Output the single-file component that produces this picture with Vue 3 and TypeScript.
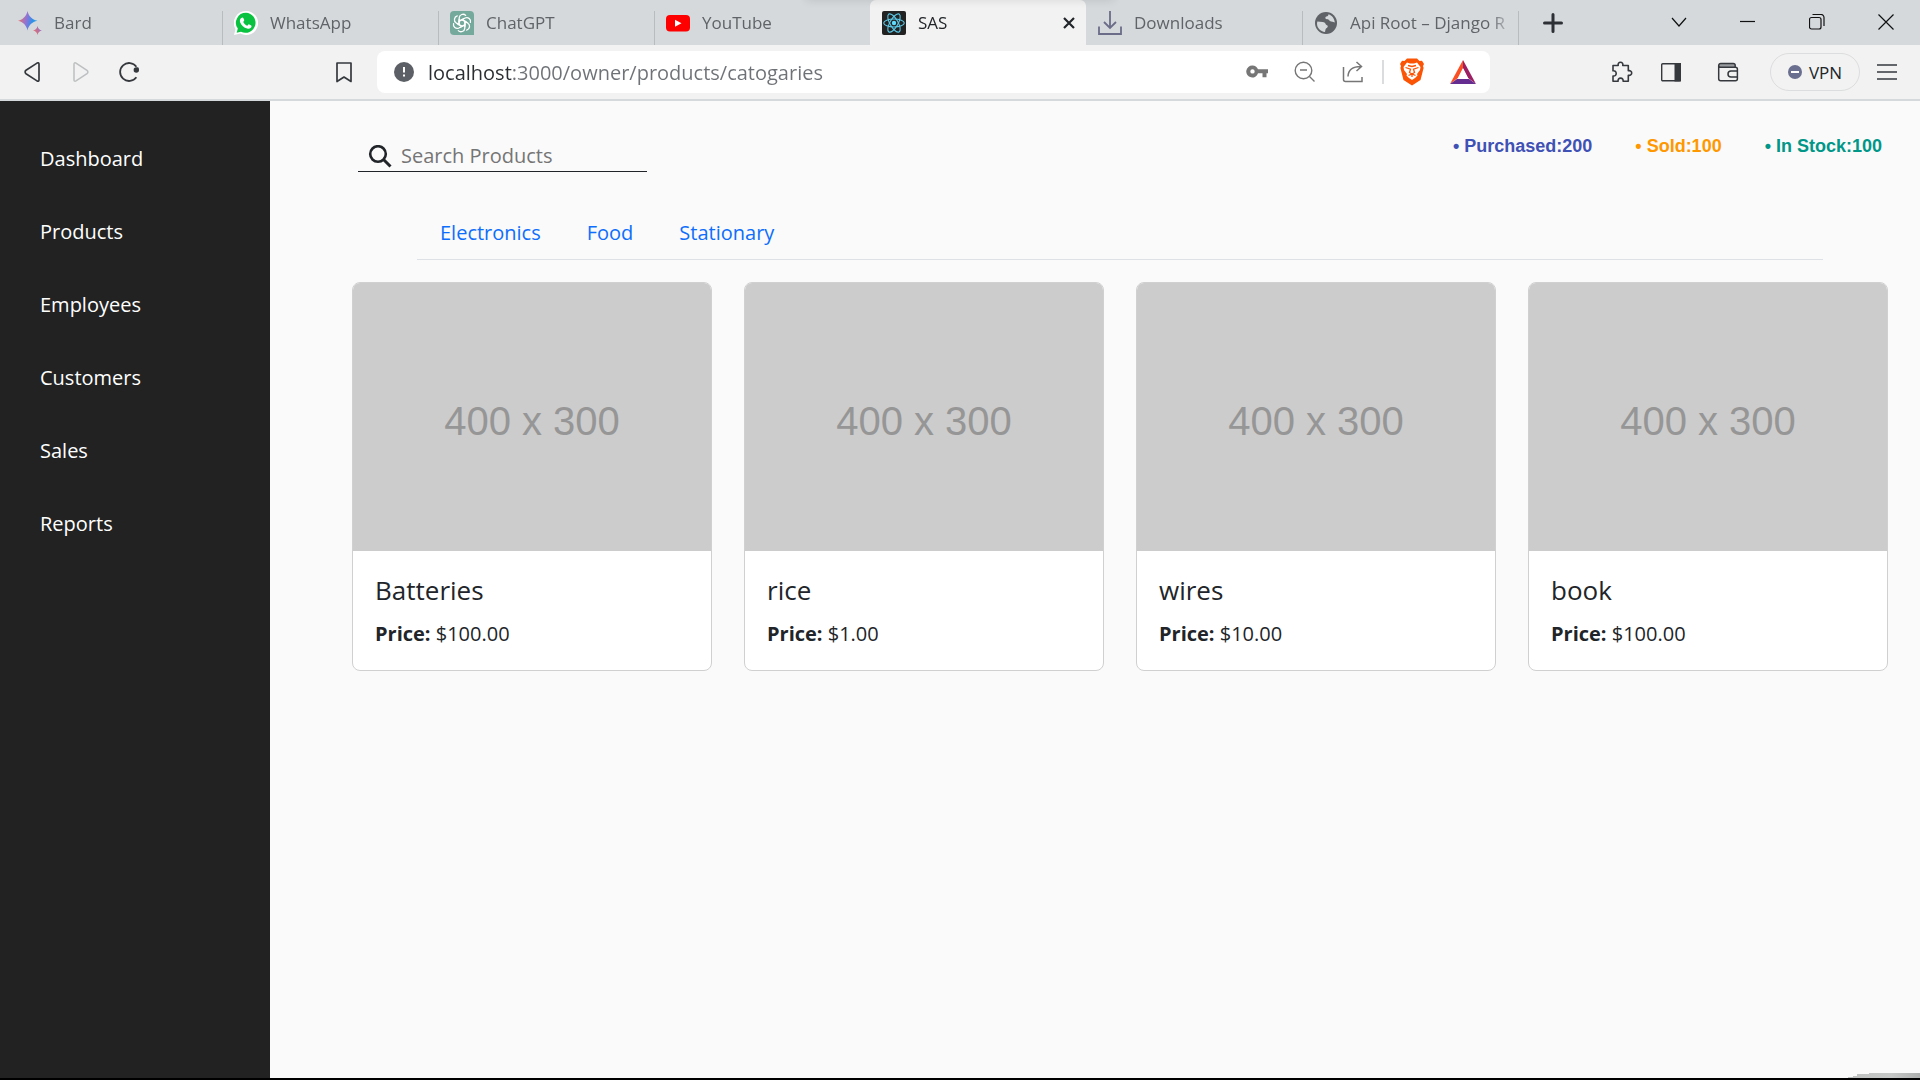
<script setup lang="ts">
import { ref } from 'vue'

interface Tab {
  id: string
  title: string
}

interface Product {
  id: number
  name: string
  price: string
}

const tabs: Tab[] = [
  { id: 'bard', title: 'Bard' },
  { id: 'whatsapp', title: 'WhatsApp' },
  { id: 'chatgpt', title: 'ChatGPT' },
  { id: 'youtube', title: 'YouTube' },
  { id: 'sas', title: 'SAS' },
  { id: 'downloads', title: 'Downloads' },
  { id: 'django', title: 'Api Root – Django R' },
]
const activeTab = ref<string>('sas')
const address = ref<string>('localhost:3000/owner/products/catogaries')
const search = ref<string>('')

const menu: string[] = ['Dashboard', 'Products', 'Employees', 'Customers', 'Sales', 'Reports']
const categories: string[] = ['Electronics', 'Food', 'Stationary']
const stats = [
  { label: 'Purchased', value: 200, kind: 'purchased' },
  { label: 'Sold', value: 100, kind: 'sold' },
  { label: 'In Stock', value: 100, kind: 'stock' },
]
const products: Product[] = [
  { id: 1, name: 'Batteries', price: '100.00' },
  { id: 2, name: 'rice', price: '1.00' },
  { id: 3, name: 'wires', price: '10.00' },
  { id: 4, name: 'book', price: '100.00' },
]
const petals: number[] = [0, 60, 120, 180, 240, 300]
</script>

<template>
  <div class="window">
    <header class="tab-bar">
      <div class="tabs" role="tablist">
        <div
          v-for="tab in tabs"
          :key="tab.id"
          class="tab"
          :class="{ active: tab.id === activeTab }"
        >
          <button class="tab-main" role="tab" :aria-selected="tab.id === activeTab" @click="activeTab = tab.id">
            <svg v-if="tab.id === 'bard'" class="favicon" viewBox="0 0 24 24">
              <defs>
                <linearGradient id="spark" x1="0" x2="1" y1="0.3" y2="0.5">
                  <stop offset="0" stop-color="#f0705c" />
                  <stop offset="0.45" stop-color="#8e74d8" />
                  <stop offset="0.75" stop-color="#2f8fe8" />
                  <stop offset="1" stop-color="#35a5dc" />
                </linearGradient>
                <linearGradient id="spark-small" x1="0" x2="1" y1="0.8" y2="0.2">
                  <stop offset="0" stop-color="#f0705c" />
                  <stop offset="1" stop-color="#8b6fd6" />
                </linearGradient>
              </defs>
              <path fill="url(#spark)" d="M9.500 0C10.500 5 14 8.500 19.500 9.700 14 11 10.500 14 9.500 19.500 8.500 14 5 11 0 9.700 5 8.500 8.500 5 9.500 0z" />
              <path fill="url(#spark-small)" d="M19.500 15c.5 2.500 2 4 4.500 4.600-2.500.6-4 2-4.500 4.400-.5-2.400-2-3.800-4.500-4.400 2.500-.6 4-2.100 4.500-4.600z" />
            </svg>
            <svg v-else-if="tab.id === 'whatsapp'" class="favicon" viewBox="0 0 24 24">
              <path fill="#fff" d="M12 0a12 12 0 1 1-5.500 22.600L0 24l1.500-6A12 12 0 0 1 12 0z" />
              <path fill="#09c340" d="M12 1.800a10 10 0 1 1-5 18.900L2.700 21.700 3.800 17.600A10 10 0 0 1 12 1.800z" />
              <path fill="#fff" d="M8.300 6.400c.6 0 .8.200 1 .7l.9 2c.2.600-.6 1.300-1 1.800 1 1.900 2.300 3 4.200 3.800.5-.5 1-1.500 1.500-1.400l2.300 1.200c.6.300.3 1.700-.3 2.300-1 .9-2.400 1.200-3.700.8-3.300-1-5.800-3.300-7.100-6.400-.6-1.600-.1-4.300 2.200-4.800z" />
            </svg>
            <svg v-else-if="tab.id === 'chatgpt'" class="favicon" viewBox="0 0 24 24">
              <path fill="#75a99c" d="M4 0h16a4 4 0 0 1 4 4v20H4a4 4 0 0 1-4-4V4a4 4 0 0 1 4-4z" />
              <g fill="none" stroke="#fff" stroke-width="1.300" stroke-linecap="round" stroke-linejoin="round">
                <path
                  v-for="angle in petals"
                  :key="angle"
                  :transform="`rotate(${angle} 12 12)`"
                  d="M9.200 10.300V6.800a3.800 3.800 0 0 1 6.500-2.400M9.200 10.300l2.800-1.700 4.400 2.500"
                />
              </g>
            </svg>
            <svg v-else-if="tab.id === 'youtube'" class="favicon" viewBox="0 0 24 24">
              <rect y="4" width="24" height="16.500" rx="4" fill="#f00" />
              <path fill="#fff" d="M9 8.700l6.500 3.500L9 15.800z" />
            </svg>
            <svg v-else-if="tab.id === 'sas'" class="favicon" viewBox="0 0 24 24">
              <rect width="24" height="24" rx="2" fill="#222" />
              <circle cx="12" cy="12" r="2.200" fill="#61dafb" />
              <g fill="none" stroke="#5bc9e8" stroke-width="1.100">
                <ellipse cx="12" cy="12" rx="10.300" ry="4" />
                <ellipse cx="12" cy="12" rx="10.300" ry="4" transform="rotate(60 12 12)" />
                <ellipse cx="12" cy="12" rx="10.300" ry="4" transform="rotate(120 12 12)" />
              </g>
            </svg>
            <svg v-else-if="tab.id === 'downloads'" class="favicon" viewBox="0 0 24 24">
              <path d="M12 0v17M6 11l6 6 6-6M1 15.500V23h22v-7.500" fill="none" stroke="#6b6c88" stroke-width="1.800" />
            </svg>
            <svg v-else class="favicon" viewBox="0 0 24 24">
              <circle cx="12" cy="12" r="11" fill="#5f6368" />
              <path fill="#d5d9dc" d="M3.300 10.500 8.500 11c2 .2 3 1 3.200 2.300.3 1 2.100.7 2.100 2.100 0 1.200-2 1.600-2.300 3L11 21C6.500 20.500 3 17 3 12.500zM14.500 3.300c0 1.300-.7 2-2.200 2.200-1.200.2-1.300 2-.2 2.600 1.100.6 2.100 0 2.900 1 .8 1.200 2.200 1.900 3.600 1.700l2.200.6c-.3-3.700-2.800-6.900-6.300-8.100z" />
            </svg>
            <span class="tab-title">{{ tab.title }}</span>
          </button>
          <button v-if="tab.id === activeTab" class="tab-close" aria-label="Close tab">
            <svg width="12" height="12" viewBox="0 0 12 12">
              <path d="M1 1l10 10M11 1L1 11" stroke="#222529" stroke-width="2.200" />
            </svg>
          </button>
        </div>
        <button class="new-tab" aria-label="New tab">
          <svg width="20" height="20" viewBox="0 0 20 20">
            <path d="M10 1.500v17M1.500 10h17" stroke="#2d3135" stroke-width="3" stroke-linecap="round" />
          </svg>
        </button>
      </div>
      <div class="window-buttons">
        <button aria-label="Search tabs">
          <svg width="16" height="16" viewBox="0 0 16 16"><path d="M1 4l7 8 7-8" /></svg>
        </button>
        <button aria-label="Minimize">
          <svg width="16" height="16" viewBox="0 0 16 16"><path d="M0 7.500h15" /></svg>
        </button>
        <button aria-label="Restore">
          <svg width="16" height="16" viewBox="0 0 16 16">
            <rect x=".5" y="3.500" width="11.500" height="11.500" rx="2" />
            <path d="M3.500 .5h8.500a3 3 0 0 1 3 3v8.500" />
          </svg>
        </button>
        <button aria-label="Close">
          <svg width="16" height="16" viewBox="0 0 16 16"><path d="M.5.5l15 15M15.500.5l-15 15" /></svg>
        </button>
      </div>
    </header>

    <div class="toolbar">
      <div class="nav-buttons">
        <button aria-label="Back">
          <svg width="22" height="22" viewBox="0 0 22 22">
            <path d="M17 3v16c0 1.200-1 1.500-2 .9L4 12.700c-1.200-.9-1.200-2.500 0-3.400L15 2.100c1-.6 2-.3 2 .9z" fill="none" stroke="#35393e" stroke-width="1.700" />
          </svg>
        </button>
        <button aria-label="Forward" disabled>
          <svg width="22" height="22" viewBox="0 0 22 22">
            <path d="M4 3v16c0 1.200 1 1.500 2 .9l11-7.200c1.200-.9 1.200-2.500 0-3.400L6 2.100c-1-.6-2-.3-2 .9z" fill="none" stroke="#bdbfc1" stroke-width="1.500" />
          </svg>
        </button>
        <button aria-label="Reload">
          <svg width="22" height="22" viewBox="0 0 22 22">
            <path d="M18.400 5.700A9 9 0 1 0 18.400 16.300" fill="none" stroke="#35393e" stroke-width="1.800" />
            <circle cx="18.300" cy="9" r="2.700" fill="#35393e" />
            <path d="M19.600 6.500v3" stroke="#35393e" stroke-width="1.800" />
          </svg>
        </button>
        <button class="bookmark" aria-label="Bookmark">
          <svg width="22" height="22" viewBox="0 0 22 22">
            <path d="M4 2h14v18.500l-7-4.500-7 4.500z" fill="none" stroke="#35393e" stroke-width="1.700" stroke-linejoin="round" />
          </svg>
        </button>
      </div>

      <div class="address-bar">
        <svg width="20" height="20" viewBox="0 0 20 20">
          <circle cx="10" cy="10" r="10" fill="#5c6066" />
          <path d="M10 5v5.500M10 12.500v2" stroke="#fff" stroke-width="2" />
        </svg>
        <input v-model="address" class="address" aria-label="Address" type="text" spellcheck="false" />
        <div class="address-actions">
          <button aria-label="Passwords">
            <svg width="22" height="22" viewBox="0 0 22 22">
              <path fill="#767676" fill-rule="evenodd" d="M6.500 4.500c2.500 0 4.600 1.500 5.500 3.700h10v4h-1.500v4h-4v-4H12a6 6 0 1 1-5.500-7.700zm0 3.700a2.200 2.200 0 1 0 0 4.400 2.200 2.200 0 0 0 0-4.400z" />
            </svg>
          </button>
          <button aria-label="Zoom">
            <svg width="22" height="22" viewBox="0 0 22 22" fill="none" stroke="#767676" stroke-width="1.400">
              <circle cx="9.500" cy="9.500" r="8.300" /><path d="M6 9h7M15.500 15.500l5 5" />
            </svg>
          </button>
          <button aria-label="Share">
            <svg width="22" height="22" viewBox="0 0 22 22" fill="none" stroke="#767676" stroke-width="1.500">
              <path d="M1.500 6v12.500a2 2 0 0 0 2 2H20v-4.500M6 15.500C6.200 9.500 9 5.500 19 5.500M14.500 1l5 4.500-5 4.500" />
            </svg>
          </button>
          <span class="divider"></span>
          <button aria-label="Brave Shields">
            <svg width="24" height="28" viewBox="0 0 24 28">
              <path fill="#fb5404" d="M7 .5h10l2.500 2.500 2.500-.2 2 3.200-1 2 .6 2L20.500 22 12 27.500 3.500 22 .4 10 1 8 0 6l2-3.200 2.500.2z" />
              <path fill="#fff" d="M7 4.500l3 1h4l3-1 3.500 4.500-.5 3-3 4 .5 1.500-2.500 2.500-3 2-3-2-2.500-2.500.5-1.500-3-4-.5-3z" />
              <path fill="none" stroke="#fb5404" stroke-width="1.300" d="M5.500 9.500l5 1.700-1 3.300 2.500 1.500 2.500-1.500-1-3.300 5-1.700M8.500 17.500l3.500-1.500 3.500 1.500M12 16v3M8 7.500l4 1 4-1" />
            </svg>
          </button>
          <button aria-label="Rewards">
            <svg width="26" height="24" viewBox="0 0 26 24">
              <path fill="#fb4f24" d="M13 0v8.500L8 18 0 24z" />
              <path fill="#9c1f63" d="M13 0l13 24-8-6-5-9.500z" />
              <path fill="#662d91" d="M0 24l7-5h12l7 5z" />
              <path fill="#fff" d="M13 8l5.500 11h-11z" />
            </svg>
          </button>
        </div>
      </div>

      <div class="extension-buttons">
        <button aria-label="Extensions">
          <svg width="22" height="22" viewBox="0 0 22 22">
            <path d="M2 4.500h5.200c-.4-1.900.6-3.300 2.300-3.300s2.700 1.400 2.300 3.300h5.500v5.200c1.900-.4 3.400.6 3.400 2.300s-1.500 2.700-3.400 2.300v6h-5.200c.3-2-.7-3.200-2.500-3.200s-2.800 1.200-2.500 3.200H2V15c2 .3 3.200-.8 3.200-2.600S4 9.500 2 9.800z" fill="none" stroke="#35393e" stroke-width="1.600" stroke-linejoin="round" />
          </svg>
        </button>
        <button aria-label="Sidebar">
          <svg width="22" height="22" viewBox="0 0 22 22">
            <rect x="1.700" y="2.700" width="18.600" height="17" rx="1" fill="none" stroke="#35393e" stroke-width="1.400" />
            <path fill="#35393e" d="M14.500 2h6.500v18.500h-6.500z" />
          </svg>
        </button>
        <button class="wallet" aria-label="Wallet">
          <svg width="22" height="22" viewBox="0 0 22 22" fill="none" stroke="#35393e" stroke-width="1.500">
            <path fill="#999b9e" stroke="none" d="M2 3h16v3H2z" />
            <path d="M1.700 4.500a2 2 0 0 1 2-2h12.500a2 2 0 0 1 2 2v1.700M1.700 4.500a1.700 1.700 0 0 0 1.700 1.700h15a2 2 0 0 1 2 2v9.500a2 2 0 0 1-2 2H3.700a2 2 0 0 1-2-2zM20.400 10H14a3 3 0 0 0 0 6h6.400" />
          </svg>
        </button>
        <button class="vpn">
          <svg width="14" height="14" viewBox="0 0 14 14">
            <circle cx="7" cy="7" r="7" fill="#6b6f8f" />
            <path d="M3 7h8" stroke="#fff" stroke-width="2" />
          </svg>
          VPN
        </button>
        <button aria-label="Menu">
          <svg width="22" height="22" viewBox="0 0 22 22">
            <path d="M1 4h20M1 11h20M1 18h20" stroke="#35393e" stroke-width="1.700" />
          </svg>
        </button>
      </div>
    </div>

    <div class="page">
      <nav class="sidebar" aria-label="Main">
        <a v-for="item in menu" :key="item" href="#">{{ item }}</a>
      </nav>

      <main class="content">
        <div class="content-header">
          <label class="search">
            <svg width="24" height="24" viewBox="0 1 24 24" fill="none" stroke="#212529">
              <circle cx="10" cy="10" r="7.800" stroke-width="2.600" />
              <path d="M15.500 15.500l7 7" stroke-width="3" />
            </svg>
            <input v-model="search" type="text" placeholder="Search Products" aria-label="Search Products" />
          </label>
          <div class="stats">
            <span v-for="stat in stats" :key="stat.kind" :class="stat.kind">• {{ stat.label }}:{{ stat.value }}</span>
          </div>
        </div>

        <nav class="categories" aria-label="Categories">
          <a v-for="category in categories" :key="category" href="#">{{ category }}</a>
        </nav>

        <section class="products">
          <article v-for="product in products" :key="product.id" class="card">
            <div class="placeholder">400 x 300</div>
            <div class="card-body">
              <h5>{{ product.name }}</h5>
              <p><strong>Price:</strong> ${{ product.price }}</p>
            </div>
          </article>
        </section>
      </main>
    </div>

    <svg class="corner" width="76" height="7" viewBox="0 0 76 7" aria-hidden="true">
      <defs>
        <linearGradient id="corner-shade">
          <stop offset="0" stop-color="#bfc1c1" />
          <stop offset="0.6" stop-color="#c6c8c8" />
          <stop offset="1" stop-color="#adafaf" />
        </linearGradient>
      </defs>
      <path fill="url(#corner-shade)" d="M4 5V4h5V3h4V1h12V0h51v5z" />
    </svg>
  </div>
</template>

<style>
body {
  margin: 0;
  background: #fafafa;
}
</style>

<style scoped>
.window {
  position: relative;
  display: flex;
  flex-direction: column;
  box-sizing: border-box;
  min-height: 100vh;
  border-bottom: 2px solid #000;
  overflow: hidden;
  font-family: "Open Sans", "Noto Sans", sans-serif;
  font-size: 20px;
  color: #212529;
  background: #fafafa;
}

button {
  display: flex;
  align-items: center;
  justify-content: center;
  padding: 0;
  border: 0;
  background: none;
  font: inherit;
  color: inherit;
}

svg {
  display: block;
  flex: none;
}

input {
  min-width: 0;
  padding: 0;
  border: 0;
  outline: 0;
  background: none;
  font: inherit;
}

a {
  text-decoration: none;
}

.tab-bar {
  position: relative;
  display: flex;
  justify-content: space-between;
  height: 45px;
  background: #d5d9dc;
}

.tab-bar::before {
  content: "";
  position: absolute;
  top: -8px;
  left: 42%;
  width: 16%;
  height: 8px;
  box-shadow: 0 0 10px rgba(0, 0, 0, 0.12);
  z-index: 1;
}

.tabs {
  display: flex;
  flex: 1;
  min-width: 0;
  padding-left: 6px;
}

.tab {
  position: relative;
  display: flex;
  flex: 0 1 216px;
  min-width: 0;
  font-size: 17px;
  color: #606468;
}

.tab::after {
  content: "";
  position: absolute;
  right: -1px;
  bottom: 0;
  width: 1px;
  height: 34px;
  background: #b9bcbe;
}

.tab.active::after,
.tab:has(+ .active)::after {
  display: none;
}

.tab.active {
  border-radius: 6px 6px 0 0;
  color: #222529;
  background: #f2f2f2;
}

.tab-main {
  flex: 1;
  gap: 12px;
  justify-content: flex-start;
  min-width: 0;
  padding: 0 4px 0 12px;
}

.tab-title {
  flex: 1;
  overflow: hidden;
  text-align: left;
  white-space: nowrap;
  mask-image: linear-gradient(90deg, #000 calc(100% - 24px), transparent);
}

.favicon {
  width: 24px;
  height: 24px;
}

.tab-close {
  width: 34px;
}

.new-tab {
  width: 70px;
}

.window-buttons {
  display: flex;
  padding-bottom: 2px;
}

.window-buttons button {
  width: 69px;
}

.window-buttons svg {
  fill: none;
  stroke: #111;
  stroke-width: 1.2;
}

.toolbar {
  display: flex;
  align-items: center;
  height: 54px;
  border-bottom: 2px solid #d5d9dc;
  background: #f2f2f2;
}

.nav-buttons {
  display: flex;
  gap: 26px;
  box-sizing: border-box;
  width: 377px;
  padding: 0 22px;
}

.nav-buttons .bookmark {
  margin-left: auto;
}

.address-bar {
  display: flex;
  flex: 1;
  align-items: center;
  gap: 14px;
  box-sizing: border-box;
  min-width: 0;
  height: 42px;
  padding: 0 14px 0 17px;
  border-radius: 8px;
  background: #fff;
}

.address {
  flex: 1;
  height: 42px;
  color: transparent;
  caret-color: #2b2e31;
  background: linear-gradient(90deg, #2b2e31 84px, #6e7276 84px);
  background-clip: text;
}

.address-actions {
  display: flex;
  align-items: center;
  gap: 26px;
}

.divider {
  width: 2px;
  height: 24px;
  margin: 0 -10px 0 -8px;
  background: #dadcde;
}

.extension-buttons {
  display: flex;
  align-items: center;
  gap: 27px;
  box-sizing: border-box;
  width: 430px;
  justify-content: flex-end;
  padding-right: 22px;
}

.wallet {
  margin: 0 4px 0 8px;
}

.vpn {
  gap: 7px;
  box-sizing: border-box;
  width: 90px;
  height: 38px;
  margin-right: -11px;
  border: 1px solid #dcdddf;
  border-radius: 19px;
  font-size: 17px;
}

.page {
  display: flex;
  flex: 1;
}

.sidebar {
  display: flex;
  flex-direction: column;
  flex: none;
  box-sizing: border-box;
  width: 270px;
  padding: 21px 40px;
  background: #222;
}

.sidebar a {
  line-height: 73px;
  color: #fff;
}

.content {
  flex: 1;
  min-width: 0;
}

.content-header {
  display: flex;
  justify-content: space-between;
  align-items: flex-start;
  padding: 35px 38px 0 88px;
}

.search {
  display: flex;
  align-items: flex-end;
  gap: 9px;
  box-sizing: border-box;
  width: 289px;
  height: 36px;
  padding: 0 10px 2px;
  border-bottom: 1px solid #212529;
}

.search input {
  flex: 1;
  height: 28px;
  color: #212529;
}

.search input::placeholder {
  color: #757575;
  opacity: 1;
}

.stats {
  display: flex;
  gap: 43px;
  font-family: "Liberation Sans", Arial, sans-serif;
  font-size: 18px;
  font-weight: 700;
  line-height: 20px;
}

.purchased {
  color: #3f51b5;
}

.sold {
  color: #ff9800;
}

.stock {
  color: #009688;
}

.categories {
  display: flex;
  margin: 34px 97px 0 147px;
  border-bottom: 1px solid #dee2e6;
}

.categories a {
  padding: 0 23px;
  line-height: 53px;
  color: #0d6efd;
}

.products {
  display: grid;
  grid-template-columns: repeat(4, 1fr);
  gap: 32px;
  padding: 22px 32px 32px 82px;
}

.card {
  border: 1px solid #d0d0d1;
  border-radius: 8px;
  overflow: hidden;
  background: #fff;
}

.placeholder {
  display: flex;
  align-items: center;
  justify-content: center;
  box-sizing: border-box;
  aspect-ratio: 358 / 268;
  padding-top: 8px;
  font-family: "Liberation Sans", Arial, sans-serif;
  font-size: 40px;
  color: #969696;
  background: #ccc;
}

.card-body {
  padding: 22px 22px 20px;
}

h5 {
  margin: 0 0 11px;
  font-size: 26px;
  font-weight: 500;
  line-height: 34px;
}

p {
  margin: 0;
  line-height: 32px;
}

.corner {
  position: absolute;
  right: 0;
  bottom: -2px;
}
</style>
